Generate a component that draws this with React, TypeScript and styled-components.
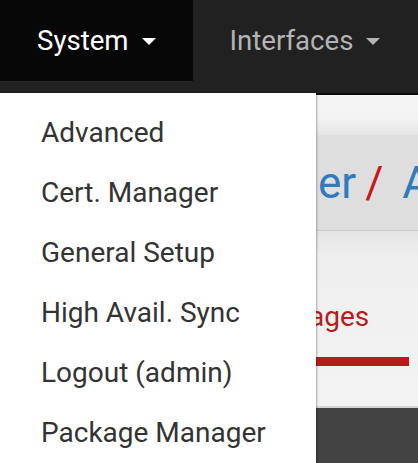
import React from "react"
import styled, { createGlobalStyle } from "styled-components"

const GlobalStyle = createGlobalStyle`
  html, body {
    margin: 0;
    padding: 0;
    overflow: hidden;
    background: #444444;
  }
  body {
    font-family: Roboto, "Liberation Sans", sans-serif;
  }
  * {
    box-sizing: border-box;
  }
`

const menuItems = [
  "Advanced",
  "Cert. Manager",
  "General Setup",
  "High Avail. Sync",
  "Logout (admin)",
  "Package Manager",
]

export default function App() {
  return (
    <Page>
      <GlobalStyle />
      <Navbar>
        <NavItem $active>
          System
          <Caret $active />
        </NavItem>
        <NavItem>
          Interfaces
          <Caret />
        </NavItem>
      </Navbar>

      <HeaderBand />
      <Breadcrumb>
        <Crumb>Package Manager</Crumb>
        <Divider>/</Divider>
        <Crumb>Available Packages</Crumb>
      </Breadcrumb>
      <TabsBand>
        <TabRow>
          <Tab $active>Available Packages</Tab>
        </TabRow>
      </TabsBand>
      <Footer />

      <Dropdown>
        {menuItems.map(item => (
          <MenuItem key={item}>{item}</MenuItem>
        ))}
      </Dropdown>
    </Page>
  )
}

const Page = styled.div`
  position: relative;
  width: 418px;
  height: 463px;
  display: flex;
  flex-direction: column;
  overflow: hidden;
`

const Navbar = styled.nav`
  display: flex;
  align-items: flex-start;
  height: 95px;
  flex-shrink: 0;
  background-color: #212121;
  border-bottom: 2px solid #0b0b0b;
`

const NavItem = styled.div<{ $active?: boolean }>`
  display: flex;
  align-items: center;
  height: 81px;
  padding: 0 37px 0 37px;
  font-size: 27.6px;
  white-space: nowrap;
  color: ${p => (p.$active ? "#ffffff" : "#b4b4b4")};
  background-color: ${p => (p.$active ? "#070707" : "transparent")};
`

const Caret = styled.span<{ $active?: boolean }>`
  display: inline-block;
  width: 0;
  height: 0;
  margin-left: 13px;
  margin-top: 2px;
  border-left: 7.5px solid transparent;
  border-right: 7.5px solid transparent;
  border-top: 7px solid ${p => (p.$active ? "#ffffff" : "#b4b4b4")};
`

const HeaderBand = styled.div`
  height: 40px;
  flex-shrink: 0;
  background: linear-gradient(to bottom, #f5f5f5 0%, #f2f2f2 60%, #e4e4e4 100%);
`

const Breadcrumb = styled.h1`
  display: flex;
  align-items: center;
  gap: 9px;
  height: 96px;
  flex-shrink: 0;
  margin: 0;
  padding-left: 3px;
  font-size: 44px;
  font-weight: 400;
  white-space: nowrap;
  background-color: #dedede;
  border-bottom: 1px solid #cbcbcb;
`

const Crumb = styled.span`
  color: #2f7bbd;
`

const Divider = styled.span`
  color: #c41a1a;
  margin-right: 10px;
`

const TabsBand = styled.div`
  height: 177px;
  flex-shrink: 0;
  background: linear-gradient(to bottom, #e4e4e4 0%, #efefef 14%, #f3f3f3 100%);
  border-bottom: 2px solid #d6d6d6;
`

const TabRow = styled.div`
  display: flex;
  padding: 66px 0 0 88px;
`

const Tab = styled.div<{ $active?: boolean }>`
  padding: 0 40px 20px;
  font-size: 28px;
  line-height: 40px;
  white-space: nowrap;
  color: ${p => (p.$active ? "#b71c1c" : "#555555")};
  border-bottom: 9px solid ${p => (p.$active ? "#b71c1c" : "transparent")};
`

const Footer = styled.div`
  flex: 1;
  background-color: #434343;
`

const Dropdown = styled.ul`
  position: absolute;
  top: 93px;
  left: 0;
  bottom: -20px;
  width: 316px;
  margin: 0;
  padding: 10px 0 0;
  list-style: none;
  background-color: #ffffff;
  box-shadow: 1px 0 2px rgba(0, 0, 0, 0.3);
`

const MenuItem = styled.li`
  height: 60px;
  line-height: 60px;
  padding-left: 41px;
  font-size: 28px;
  color: #333333;
  white-space: nowrap;
`
